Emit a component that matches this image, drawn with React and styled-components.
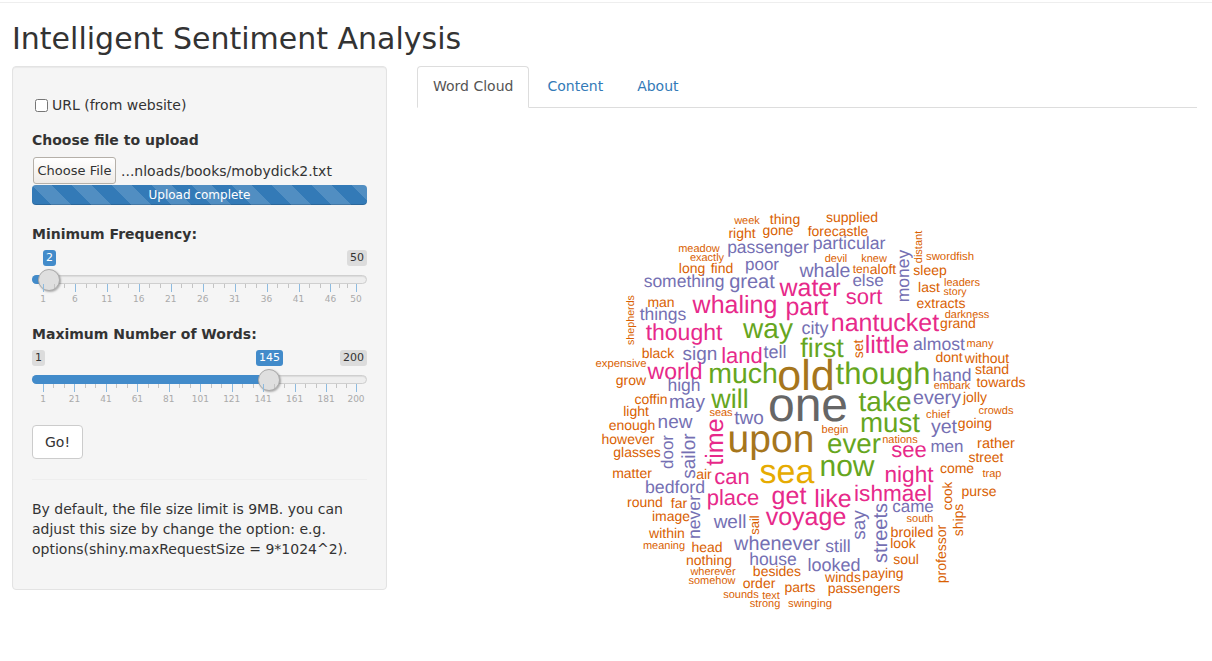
import React from 'react';
import styled, { createGlobalStyle } from 'styled-components';

const GlobalStyle = createGlobalStyle`
  html, body {
    margin: 0;
    padding: 0;
    background: #fff;
    overflow: hidden;
  }
  body {
    font-family: "DejaVu Sans", sans-serif;
    font-size: 14px;
    line-height: 20px;
    color: #333;
  }
  * {
    box-sizing: border-box;
  }
`;

const Page = styled.div`
  height: 661px;
  padding: 0 15px 0 12px;
  border-top: 1px solid #fff;
`;

const TopRule = styled.div`
  height: 1px;
  margin: 1px -15px 0 -12px;
  background: #eee;
`;

const Title = styled.h2`
  margin: 19px 0 11px;
  font-size: 30px;
  font-weight: 400;
  line-height: 33px;
  color: #333;
`;

const Columns = styled.div`
  display: flex;
  gap: 30px;
  align-items: flex-start;
`;

const Sidebar = styled.form`
  flex: 0 0 375px;
  height: 524px;
  padding: 19px;
  background: #f5f5f5;
  border: 1px solid #e3e3e3;
  border-radius: 4px;
  box-shadow: inset 0 1px 1px rgba(0, 0, 0, .05);
`;

const Main = styled.div`
  flex: 1;
  min-width: 0;
`;

const CheckRow = styled.label`
  display: flex;
  align-items: center;
  height: 20px;
  margin-top: 9px;
  padding-left: 3px;
`;

const Check = styled.input`
  width: 13px;
  height: 13px;
  margin: 1px 4px 0 0;
`;

const FieldLabel = styled.label`
  display: block;
  font-weight: 700;
  line-height: 20px;
`;

const UploadLabel = styled(FieldLabel)`
  margin-top: 15px;
`;

const FileRow = styled.div`
  display: flex;
  align-items: center;
  height: 27px;
  margin-top: 7px;
  padding-left: 1px;
`;

const FileButton = styled.button`
  width: 83px;
  height: 27px;
  padding: 0;
  font: 13px "DejaVu Sans", sans-serif;
  color: #333;
  background: linear-gradient(#fff, #efebe7);
  border: 1px solid #b5b0a9;
  border-radius: 3px;
`;

const FileName = styled.span`
  margin-left: 5px;
  white-space: nowrap;
`;

const Progress = styled.div`
  height: 20px;
  margin-top: 1px;
  font-size: 12px;
  line-height: 20px;
  text-align: center;
  color: #fff;
  border-radius: 4px;
  background-color: #337ab7;
  background-image: linear-gradient(45deg, rgba(255,255,255,.15) 25%, transparent 25%, transparent 50%, rgba(255,255,255,.15) 50%, rgba(255,255,255,.15) 75%, transparent 75%, transparent);
  background-size: 40px 40px;
  box-shadow: inset 0 -1px 0 rgba(0, 0, 0, .15);
`;

const SliderField = styled.div`
  margin-top: ${(p) => p.$top}px;
`;

const SliderBox = styled.div`
  display: flex;
  flex-direction: column;
  margin-top: 6px;
`;

const BubbleRow = styled.div`
  position: relative;
  display: flex;
  justify-content: space-between;
  height: 16px;
`;

const Bubble = styled.span`
  height: 16px;
  padding: 0 3px;
  font-size: 11px;
  line-height: 16px;
  border-radius: 3px;
  white-space: nowrap;
  color: #333;
  background: rgba(0, 0, 0, .1);
`;

const MaxBubble = styled(Bubble)`
  margin-left: auto;
`;

const ValueBubble = styled(Bubble)`
  position: absolute;
  top: 0;
  color: #fff;
  background: #428bca;
`;

const Rail = styled.div`
  position: relative;
  height: 9px;
  margin-top: 9px;
  background: #eee;
  border: 1px solid #cfcfcf;
  border-radius: 5px;
  box-shadow: inset 0 1px 1px rgba(0, 0, 0, .08);
`;

const Fill = styled.div`
  position: absolute;
  left: -1px;
  top: -1px;
  bottom: -1px;
  background: #428bca;
  border-radius: 5px 0 0 5px;
`;

const Handle = styled.div`
  position: absolute;
  top: 50%;
  width: 22px;
  height: 22px;
  margin: -11px 0 0 -12px;
  background: #dfdfdf;
  border: 1px solid #aaa;
  border-radius: 50%;
  box-shadow: 1px 1px 2px rgba(0, 0, 0, .3);
`;

const TickArea = styled.div`
  position: relative;
  height: 22px;
`;

const Tick = styled.i`
  position: absolute;
  top: 0;
  width: 1px;
  height: ${(p) => (p.$major ? 8 : 4)}px;
  background: ${(p) => (p.$major ? '#8dbbe0' : '#c4c4c4')};
`;

const TickLabel = styled.span`
  position: absolute;
  top: 9px;
  font-size: 9px;
  line-height: 12px;
  color: #aaa;
  transform: translateX(-50%);
`;

const GoButton = styled.button`
  display: block;
  width: 51px;
  height: 34px;
  margin-top: 19px;
  padding: 0;
  font: 14px "DejaVu Sans", sans-serif;
  color: #333;
  background: #fff;
  border: 1px solid #ccc;
  border-radius: 4px;
`;

const Rule = styled.hr`
  height: 1px;
  margin: 20px 0 19px;
  border: 0;
  background: #eee;
`;

const Note = styled.p`
  margin: 0;
`;

const TabBar = styled.ul`
  display: flex;
  gap: 2px;
  height: 42px;
  margin: 0;
  padding: 0;
  list-style: none;
  border-bottom: 1px solid #ddd;
`;

const Tab = styled.li`
  height: 42px;
  padding: 9px 15px;
  color: ${(p) => (p.$active ? '#555' : '#337ab7')};
  background: ${(p) => (p.$active ? '#fff' : 'transparent')};
  border: 1px solid ${(p) => (p.$active ? '#ddd' : 'transparent')};
  border-bottom-color: ${(p) => (p.$active ? '#fff' : 'transparent')};
  border-radius: 4px 4px 0 0;
`;

const CloudSvg = styled.svg`
  display: block;
  width: 780px;
  height: 540px;
`;

const CloudWord = styled.text`
  font-family: "Liberation Sans", Arial, sans-serif;
  text-anchor: middle;
  text-rendering: geometricPrecision;
`;

const O = '#D95F02';
const P = '#7570B3';
const K = '#E7298A';
const G = '#66A61E';
const Y = '#E6AB02';
const B = '#A6761D';
const D = '#666666';

// word, centre x, baseline y, size, colour, rotated
const WORDS = [
  ['week', 747, 224, 11, O], ['thing', 785, 224, 14, O], ['right', 742, 238, 14, O], ['gone', 778, 235, 14, O],
  ['meadow', 699, 252, 11, O], ['exactly', 707, 261, 11, O], ['passenger', 768, 253, 17.5, P], ['long', 692, 273, 14, O],
  ['find', 722, 273, 14, O], ['poor', 762, 270, 17, P], ['something', 684, 287, 17.5, P], ['great', 752, 288, 20, P],
  ['whaling', 735, 313, 25, K], ['man', 661, 307, 14, O], ['things', 663, 320, 17.5, P], ['shepherds', 634, 320, 10.7, O, true],
  ['thought', 684, 340, 23, K], ['way', 768, 338, 28, G], ['black', 658, 358, 14, O], ['sign', 700, 360, 19, P],
  ['land', 742, 363, 22, K], ['tell', 775, 358, 18, P], ['expensive', 621, 367, 11.3, O], ['world', 675, 379, 23, K],
  ['much', 743, 383, 28.5, G], ['grow', 631, 385, 14, O], ['high', 684, 391, 17.5, P], ['old', 806, 390, 43, B],
  ['coffin', 651, 404, 14, O], ['may', 687, 408, 19, P], ['will', 730, 408, 27, G], ['one', 808, 421, 48, D],
  ['light', 636, 416, 14, O], ['enough', 632, 430, 14, O], ['new', 675, 428, 19, P], ['seas', 721, 416, 11, O],
  ['two', 749, 424, 19, P], ['however', 628, 444, 14, O], ['glasses', 637, 457, 14, O], ['door', 673, 452, 17, P, true],
  ['sailor', 695, 456, 19, P, true], ['time', 723, 442, 25, K, true], ['upon', 771, 452, 39, B], ['matter', 632, 478, 14, O],
  ['air', 704, 479, 14, O], ['can', 732, 484, 22, K], ['sea', 787, 483, 34, Y], ['bedford', 675, 493, 17.7, P],
  ['round', 645, 507, 14, O], ['far', 679, 508, 14, O], ['never', 700, 517, 17.6, P, true], ['place', 733, 505, 22, K],
  ['get', 789, 504, 25, K], ['image', 671, 521, 14, O], ['well', 730, 528, 19, P], ['sail', 759, 525, 13, O, true],
  ['voyage', 806, 525, 25, K], ['within', 667, 538, 14, O], ['meaning', 664, 549, 11, O], ['head', 707, 552, 14, O],
  ['whenever', 777, 550, 19.8, P], ['nothing', 709, 565, 14, O], ['house', 773, 565, 17.5, P], ['wherever', 713, 575, 11, O],
  ['besides', 777, 576, 14, O], ['somehow', 712, 584, 11, O], ['order', 759, 588, 14, O], ['parts', 800, 592, 14, O],
  ['sounds', 741, 598, 11, O], ['text', 771, 599, 11, O], ['strong', 765, 607, 11, O], ['swinging', 810, 607, 11.3, O],
  ['supplied', 852, 222, 14, O], ['forecastle', 838, 236, 14, O], ['particular', 849, 249, 17.7, P], ['distant', 922, 247, 11, O, true],
  ['money', 909, 276, 17.5, P, true], ['swordfish', 950, 260, 11.4, O], ['devil', 836, 262, 11, O], ['knew', 874, 262, 11, O],
  ['whale', 825, 277, 19.5, P], ['ten', 861, 273, 12, O], ['aloft', 883, 274, 14, O], ['sleep', 930, 275, 14, O],
  ['else', 868, 286, 17, P], ['leaders', 962, 286, 11, O], ['last', 929, 292, 14, O], ['story', 955, 295, 10.6, O],
  ['water', 810, 296, 25, K], ['part', 807, 315, 25, K], ['sort', 864, 304, 22, K], ['extracts', 941, 308, 14, O],
  ['darkness', 967, 318, 11, O], ['nantucket', 885, 331, 25, K], ['grand', 958, 328, 14, O], ['city', 815, 334, 18, P],
  ['first', 822, 357, 27, G], ['set', 863, 349, 14, O, true], ['little', 887, 353, 25, K], ['almost', 939, 350, 17.6, P],
  ['many', 980, 347, 11, O], ['dont', 949, 362, 14, O], ['without', 987, 363, 14, O], ['stand', 992, 374, 14, O],
  ['though', 883, 384, 31, G], ['hand', 952, 381, 17.5, P], ['embark', 952, 389, 11, O], ['towards', 1001, 387, 14, O],
  ['take', 885, 411, 28, G], ['every', 937, 404, 19.6, P], ['jolly', 975, 402, 14, O], ['crowds', 996, 414, 11, O],
  ['chief', 938, 418, 11.3, O], ['going', 975, 428, 14, O], ['yet', 944, 433, 19.6, P], ['must', 890, 432, 27.7, G],
  ['begin', 835, 433, 11, O], ['ever', 854, 453, 27.7, G], ['nations', 900, 443, 11, O], ['see', 909, 457, 22, K],
  ['men', 947, 452, 17, P], ['rather', 996, 448, 14.5, O], ['street', 986, 462, 14, O], ['now', 847, 476, 30, G],
  ['come', 957, 473, 14, O], ['night', 909, 482, 22.6, K], ['trap', 992, 477, 11, O], ['cook', 952, 496, 13.5, O, true],
  ['purse', 979, 496, 14, O], ['like', 833, 507, 25, K], ['ishmael', 893, 501, 22.6, K], ['came', 913, 512, 17, P],
  ['ships', 963, 520, 14, O, true], ['say', 865, 525, 19, P, true], ['streets', 887, 533, 20, P, true], ['south', 920, 522, 11, O],
  ['broiled', 912, 537, 14.3, O], ['look', 903, 548, 14, O], ['still', 838, 552, 17.5, P], ['soul', 906, 564, 14, O],
  ['professor', 946, 554, 14, O, true], ['looked', 834, 571, 18, P], ['paying', 883, 578, 14, O], ['winds', 843, 582, 14, O],
  ['passengers', 864, 593, 14, O],
];

const LEFT_PAD = 11;
const RANGE = 313;

const Slider = ({
  min, max, value, majors, showMin,
}) => {
  const pos = (v) => LEFT_PAD + ((v - min) / (max - min)) * RANGE;
  const minors = majors.slice(1).flatMap((m, i) => {
    const step = (pos(m) - pos(majors[i])) / 3;
    return [pos(majors[i]) + step, pos(majors[i]) + 2 * step];
  });
  const valueText = String(value);
  const bubbleWidth = valueText.length * 7 + 6;
  return (
    <SliderBox>
      <BubbleRow>
        {showMin && <Bubble>{min}</Bubble>}
        <MaxBubble>{max}</MaxBubble>
        <ValueBubble style={{ left: pos(value) - bubbleWidth / 2 }}>{valueText}</ValueBubble>
      </BubbleRow>
      <Rail>
        <Fill style={{ width: pos(value) }} />
        <Handle style={{ left: pos(value) }} />
      </Rail>
      <TickArea>
        {minors.map((x) => <Tick key={x} style={{ left: x }} />)}
        {majors.map((m) => <Tick $major key={m} style={{ left: pos(m) }} />)}
        {majors.map((m) => <TickLabel key={m} style={{ left: pos(m) }}>{m}</TickLabel>)}
      </TickArea>
    </SliderBox>
  );
};

const App = () => (
  <Page>
    <GlobalStyle />
    <TopRule />
    <Title>Intelligent Sentiment Analysis</Title>
    <Columns>
      <Sidebar>
        <CheckRow>
          <Check type="checkbox" />
          URL (from website)
        </CheckRow>
        <UploadLabel>Choose file to upload</UploadLabel>
        <FileRow>
          <FileButton type="button">Choose File</FileButton>
          <FileName>...nloads/books/mobydick2.txt</FileName>
        </FileRow>
        <Progress>Upload complete</Progress>
        <SliderField $top={19}>
          <FieldLabel>Minimum Frequency:</FieldLabel>
          <Slider min={1} max={50} value={2} majors={[1, 6, 11, 16, 21, 26, 31, 36, 41, 46, 50]} />
        </SliderField>
        <SliderField $top={18}>
          <FieldLabel>Maximum Number of Words:</FieldLabel>
          <Slider showMin min={1} max={200} value={145} majors={[1, 21, 41, 61, 81, 101, 121, 141, 161, 181, 200]} />
        </SliderField>
        <GoButton type="button">Go!</GoButton>
        <Rule />
        <Note>
          By default, the file size limit is 9MB. you can adjust this size by change the option: e.g.
          options(shiny.maxRequestSize = 9*1024^2).
        </Note>
      </Sidebar>
      <Main>
        <TabBar>
          <Tab $active>Word Cloud</Tab>
          <Tab>Content</Tab>
          <Tab>About</Tab>
        </TabBar>
        <CloudSvg viewBox="417 108 780 540">
          {WORDS.map(([word, x, y, size, color, rotated]) => (
            <CloudWord
              key={word}
              x={x}
              y={y}
              fontSize={size}
              fill={color}
              transform={rotated ? `rotate(-90 ${x} ${y})` : undefined}
            >
              {word}
            </CloudWord>
          ))}
        </CloudSvg>
      </Main>
    </Columns>
  </Page>
);

export default App;
